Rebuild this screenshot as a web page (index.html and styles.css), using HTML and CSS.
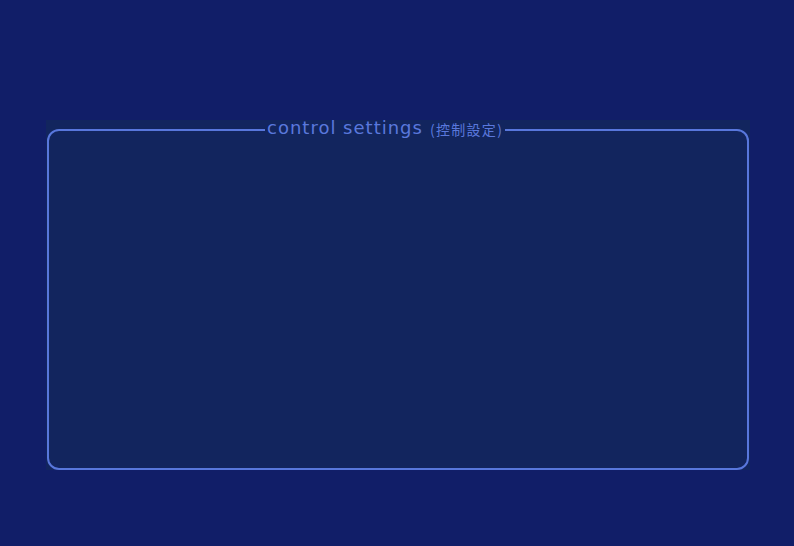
FILE: index.html
```html
<!DOCTYPE html>
<html>
<head>
<meta charset="utf-8">
<link rel="stylesheet" href="styles.css">
</head>
<body>
<div class="panel">
  <fieldset class="group">
    <legend class="group-title"><span class="main">control settings</span><span class="sub">(控制設定)</span></legend>
  </fieldset>
</div>
</body>
</html>
```
FILE: styles.css
```css
html, body {
  margin: 0;
  padding: 0;
  background: #111e68;
}
body {
  width: 794px;
  height: 546px;
  padding-top: 120px;
  box-sizing: border-box;
  font-family: "DejaVu Sans", sans-serif;
}
.panel {
  margin-left: 46px;
  width: 704px;
  height: 350px;
  background: #12255e;
  padding: 0 1px;
  box-sizing: border-box;
}
.group {
  margin: 0;
  height: 100%;
  box-sizing: border-box;
  border: 2px solid #5877dc;
  border-radius: 12px;
  padding: 0;
}
.group-title {
  margin-left: 216px;
  padding: 0 2px;
  color: #5a78dc;
  font-size: 18px;
  line-height: 20px;
  white-space: nowrap;
}
.main {
  letter-spacing: 1px;
  position: relative;
  top: -2px;
}
.sub {
  font-family: "Noto Sans CJK TC", sans-serif;
  font-size: 14px;
  letter-spacing: 1.3px;
  margin-left: 7px;
  position: relative;
  top: -1px;
}
```
